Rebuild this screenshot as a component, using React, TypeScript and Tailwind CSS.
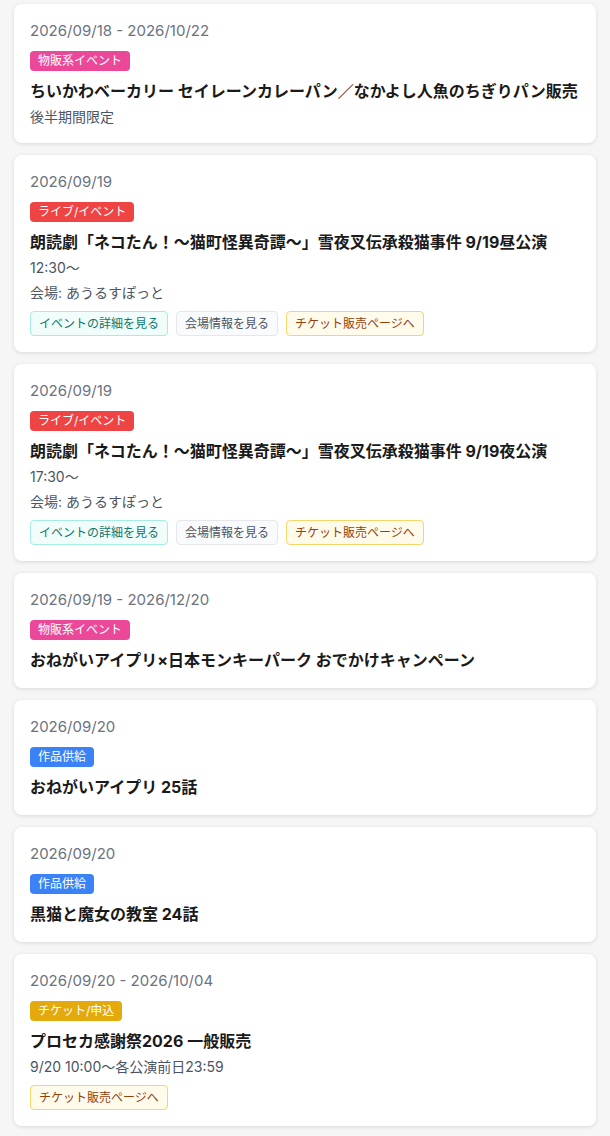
import React from 'react';

type LinkKind = 'detail' | 'venue' | 'ticket';

type EventItem = {
  date: string;
  category: string;
  categoryClass: string;
  title: string;
  lines?: string[];
  links?: LinkKind[];
};

const linkStyles: Record<LinkKind, { label: string; className: string }> = {
  detail: {
    label: 'イベントの詳細を見る',
    className: 'bg-[#f0fdfa] border-[#a7ece0] text-[#0f766e]',
  },
  venue: {
    label: '会場情報を見る',
    className: 'bg-[#f9fafb] border-[#e5e7eb] text-[#4b5563]',
  },
  ticket: {
    label: 'チケット販売ページへ',
    className: 'bg-[#fffbeb] border-[#f6d56b] text-[#92400e]',
  },
};

const events: EventItem[] = [
  {
    date: '2026/09/18 - 2026/10/22',
    category: '物販系イベント',
    categoryClass: 'bg-[#ec4899]',
    title: 'ちいかわベーカリー セイレーンカレーパン／なかよし人魚のちぎりパン販売',
    lines: ['後半期間限定'],
  },
  {
    date: '2026/09/19',
    category: 'ライブ/イベント',
    categoryClass: 'bg-[#ef4444]',
    title: '朗読劇「ネコたん！〜猫町怪異奇譚〜」雪夜叉伝承殺猫事件 9/19昼公演',
    lines: ['12:30〜', '会場: あうるすぽっと'],
    links: ['detail', 'venue', 'ticket'],
  },
  {
    date: '2026/09/19',
    category: 'ライブ/イベント',
    categoryClass: 'bg-[#ef4444]',
    title: '朗読劇「ネコたん！〜猫町怪異奇譚〜」雪夜叉伝承殺猫事件 9/19夜公演',
    lines: ['17:30〜', '会場: あうるすぽっと'],
    links: ['detail', 'venue', 'ticket'],
  },
  {
    date: '2026/09/19 - 2026/12/20',
    category: '物販系イベント',
    categoryClass: 'bg-[#ec4899]',
    title: 'おねがいアイプリ×日本モンキーパーク おでかけキャンペーン',
  },
  {
    date: '2026/09/20',
    category: '作品供給',
    categoryClass: 'bg-[#3b82f6]',
    title: 'おねがいアイプリ 25話',
  },
  {
    date: '2026/09/20',
    category: '作品供給',
    categoryClass: 'bg-[#3b82f6]',
    title: '黒猫と魔女の教室 24話',
  },
  {
    date: '2026/09/20 - 2026/10/04',
    category: 'チケット/申込',
    categoryClass: 'bg-[#e3a90d]',
    title: 'プロセカ感謝祭2026 一般販売',
    lines: ['9/20 10:00〜各公演前日23:59'],
    links: ['ticket'],
  },
];

const EventCard = ({ item }: { item: EventItem }) => (
  <div className="bg-white rounded-lg shadow-[0_1px_4px_rgba(0,0,0,0.12)] px-4 py-4">
    <div className="text-[15px] leading-[21px] text-[#6b7280]">{item.date}</div>
    <div className="mt-2.5 flex">
      <span className={`${item.categoryClass} text-white text-xs leading-4 py-0.5 px-2 rounded`}>
        {item.category}
      </span>
    </div>
    <div className="mt-2 text-base leading-6 font-bold text-[#1a1a1a]">{item.title}</div>
    {item.lines && (
      <div className="mt-1 flex flex-col gap-[5px]">
        {item.lines.map((line) => (
          <div key={line} className="text-sm leading-5 text-[#4b5563]">
            {line}
          </div>
        ))}
      </div>
    )}
    {item.links && (
      <div className="mt-2 flex gap-2">
        {item.links.map((kind) => (
          <a
            key={kind}
            href="#"
            className={`${linkStyles[kind].className} border rounded text-xs leading-[17px] py-[3px] px-2`}
          >
            {linkStyles[kind].label}
          </a>
        ))}
      </div>
    )}
  </div>
);

export default function App() {
  return (
    <div
      className="min-h-screen bg-[#f6f6f7] px-3.5 pt-1 pb-4"
      style={{ fontFamily: 'Inter, "Noto Sans CJK JP", sans-serif' }}
    >
      <div className="flex flex-col gap-3">
        {events.map((item, i) => (
          <EventCard key={i} item={item} />
        ))}
      </div>
    </div>
  );
}
